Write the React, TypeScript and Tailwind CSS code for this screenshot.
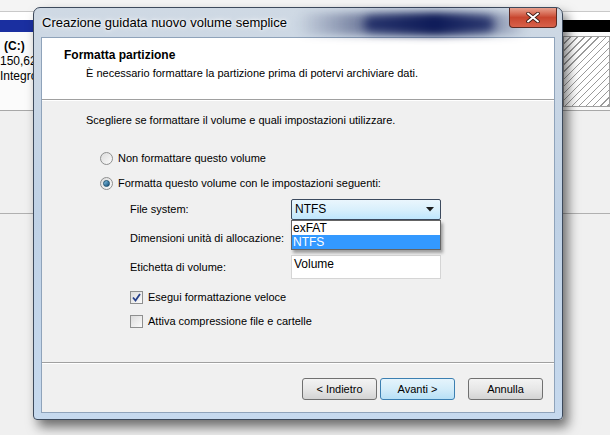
import React from 'react'

const font = { fontFamily: '"Liberation Sans", Arial, sans-serif' }

function Radio({ checked }: { checked?: boolean }) {
  return (
    <span className="relative flex h-[13px] w-[13px] items-center justify-center rounded-full border border-[#8e8f8f] bg-gradient-to-br from-[#dcdcdc] to-[#fbfbfb]">
      {checked && (
        <span className="h-[7px] w-[7px] rounded-full border border-[#1b4f6e] bg-gradient-to-br from-[#84c4e6] to-[#0f4f7a]" />
      )}
    </span>
  )
}

function Checkbox({ checked }: { checked?: boolean }) {
  return (
    <span className="flex h-[13px] w-[13px] items-center justify-center border border-[#8e8f8f] bg-gradient-to-br from-[#dcdcdc] to-[#fbfbfb]">
      {checked && (
        <svg width="9" height="9" viewBox="0 0 9 9">
          <path d="M1 4.5 L3.5 7.5 L8 1" fill="none" stroke="#26408a" strokeWidth="1.8" />
        </svg>
      )}
    </span>
  )
}

function Button({ label, primary }: { label: string; primary?: boolean }) {
  return (
    <div
      className={`flex h-[22px] w-[75px] items-center justify-center rounded-[3px] border text-[11px] text-black ${
        primary
          ? 'border-[#3c7fb1] bg-gradient-to-b from-[#e5f4fc] via-[#d3ecf9] to-[#b7e0f6]'
          : 'border-[#707070] bg-gradient-to-b from-[#f3f3f3] via-[#e7e7e7] to-[#d3d3d3]'
      }`}
    >
      {label}
    </div>
  )
}

function Background() {
  return (
    <div className="flex h-full w-full flex-col bg-[#f0f0f0]">
      <div className="h-[12px] border-b border-[#c9c9c9] bg-[#f4f4f4]" />
      <div className="h-[8px] bg-white" />
      <div className="flex h-[12px]">
        <div className="w-[60px] bg-[#1a2fa0]" />
        <div className="flex-1 bg-black" />
      </div>
      <div className="flex h-[79px] border-b border-[#a8a8a8] bg-[#fbfbfb]">
        <div className="flex w-[40px] flex-col pt-[7px] text-[12px] leading-[15px] text-black">
          <div className="pl-[4px] font-bold">(C:)</div>
          <div>150,62</div>
          <div>Integro</div>
        </div>
        <div className="flex-1" />
        <div className="mt-[4px] h-[71px] w-[47px] border border-[#a0a0a0] bg-[repeating-linear-gradient(135deg,#ffffff_0px,#ffffff_4px,#9a9a9a_4px,#9a9a9a_5px)]" />
      </div>
      <div className="h-[103px] border-b border-[#b0b0b0]" />
      <div className="flex-1" />
    </div>
  )
}

export default function App() {
  return (
    <div className="relative h-[435px] w-[610px] overflow-hidden" style={font}>
      <Background />

      {/* dialog window */}
      <div className="absolute left-[33px] top-[7px] flex h-[413px] w-[530px] flex-col rounded-t-[7px] rounded-b-[4px] border border-[#3d4a5c] bg-gradient-to-b from-[#cfd9e4] via-[#bfd1e5] to-[#c6d9ee] shadow-[5px_7px_12px_rgba(0,0,0,0.55)]">
        {/* glass smear of the window behind */}
        <div className="pointer-events-none absolute left-[262px] top-[5px] h-[22px] w-[232px] rounded-full bg-gradient-to-r from-transparent via-[#0c1850] via-60% to-transparent blur-[4px]" />
        <div className="pointer-events-none absolute left-[330px] top-[9px] h-[14px] w-[130px] rounded-full bg-[#0f1c5c] opacity-80 blur-[5px]" />
        <div className="relative flex h-[29px] items-start justify-between pl-[8px]">
          <div className="pt-[7px] text-[13px] leading-[16px] text-black [text-shadow:0_0_6px_#ffffff,0_0_3px_#ffffff]">
            Creazione guidata nuovo volume semplice
          </div>
          <div className="mr-[5px] flex h-[20px] w-[48px] items-center justify-center rounded-b-[4px] border border-[#5a2a24] border-t-0 bg-gradient-to-b from-[#e8a08e] via-[#c8462f] to-[#d8614a]">
            <svg width="14" height="11" viewBox="0 0 14 11">
              <path d="M2 1.5 L12 9.5 M12 1.5 L2 9.5" stroke="#3a1a14" strokeWidth="3.6" strokeLinecap="round" />
              <path d="M2 1.5 L12 9.5 M12 1.5 L2 9.5" stroke="#ffffff" strokeWidth="2" strokeLinecap="round" />
            </svg>
          </div>
        </div>

        {/* client area */}
        <div className="mx-[7px] mb-[6px] flex flex-1 flex-col border border-[#8fa3ba] bg-[#f0f0f0] text-[11px] text-black">
          <div className="h-[62px] border-b border-[#a0a0a0] bg-white pl-[22px] pt-[10px]">
            <div className="text-[12px] font-bold leading-[15px]">Formatta partizione</div>
            <div className="pl-[22px] pt-[3px] leading-[14px]">
              È necessario formattare la partizione prima di potervi archiviare dati.
            </div>
          </div>
          <div className="border-t border-white" />

          <div className="flex flex-1 flex-col pl-[44px] pt-[12px]">
            <div className="leading-[14px]">Scegliere se formattare il volume e quali impostazioni utilizzare.</div>

            <div className="mt-[25px] flex flex-col gap-[12px] pl-[14px]">
              <div className="flex items-center gap-[5px] leading-[13px]">
                <Radio />
                <span>Non formattare questo volume</span>
              </div>
              <div className="flex items-center gap-[5px] leading-[13px]">
                <Radio checked />
                <span>Formatta questo volume con le impostazioni seguenti:</span>
              </div>
            </div>

            <div className="mt-[8px] flex flex-col pl-[44px]">
              <div className="flex h-[22px] items-center">
                <span className="w-[161px]">File system:</span>
                <div className="relative">
                  <div className="flex h-[21px] w-[150px] items-center justify-between rounded-[2px] border border-[#3c4a5e] bg-gradient-to-b from-[#eaf6fd] via-[#d9f0fc] to-[#bee6fd] pl-[3px] pr-[6px] text-[12px]">
                    <span>NTFS</span>
                    <svg width="8" height="5" viewBox="0 0 8 5">
                      <path d="M0 0 L8 0 L4 4.5 Z" fill="#1c1c1c" />
                    </svg>
                  </div>
                  <div className="absolute left-0 top-[21px] z-10 flex w-[150px] flex-col border border-[#646464] bg-white text-[12px] leading-[14px] shadow-[2px_3px_3px_rgba(0,0,0,0.35)]">
                    <div className="pl-[1px]">exFAT</div>
                    <div className="bg-[#3399ff] pl-[1px] text-white">NTFS</div>
                  </div>
                </div>
              </div>
              <div className="mt-[7px] flex h-[22px] items-center">
                <span className="w-[161px]">Dimensioni unità di allocazione:</span>
              </div>
              <div className="mt-[6px] flex h-[24px] items-center">
                <span className="w-[161px]">Etichetta di volume:</span>
                <div className="h-[24px] w-[150px] border border-[#d5d5d5] bg-white pl-[2px] pt-[1px] text-[12px] leading-[15px]">
                  Volume
                </div>
              </div>

              <div className="mt-[12px] flex flex-col gap-[11px]">
                <div className="flex items-center gap-[5px] leading-[13px]">
                  <Checkbox checked />
                  <span>Esegui formattazione veloce</span>
                </div>
                <div className="flex items-center gap-[5px] leading-[13px]">
                  <Checkbox />
                  <span>Attiva compressione file e cartelle</span>
                </div>
              </div>
            </div>
          </div>

          <div className="border-t border-[#a0a0a0]" />
          <div className="flex h-[49px] items-start justify-end border-t border-white pr-[11px] pt-[14px]">
            <div className="flex gap-[3px]">
              <Button label="< Indietro" />
              <Button label="Avanti >" primary />
            </div>
            <div className="ml-[13px]">
              <Button label="Annulla" />
            </div>
          </div>
        </div>
      </div>
    </div>
  )
}
